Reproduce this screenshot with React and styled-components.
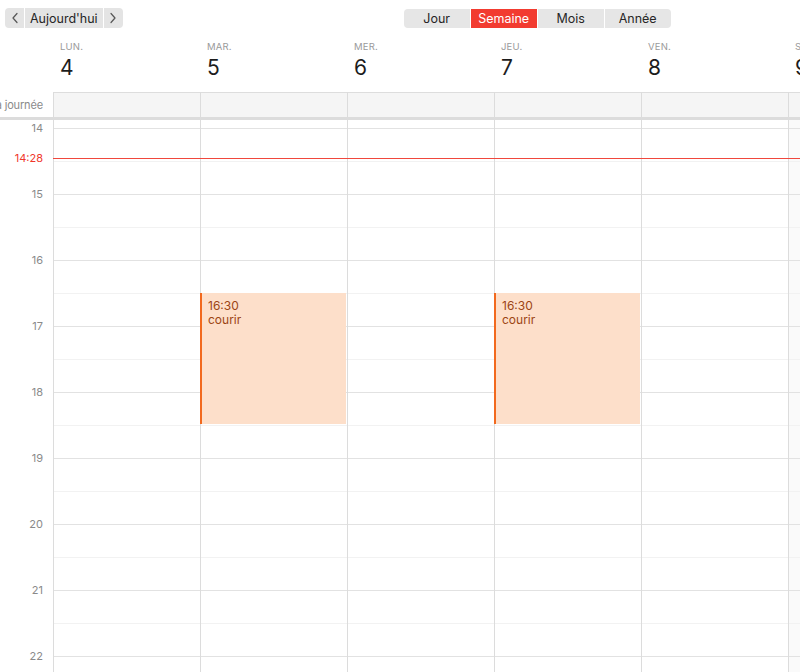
import React from "react";
import { styled, createGlobalStyle } from "styled-components";

const GUTTER = 53;
const COL = 147;
const HOUR = 66;
const FIRST_HOUR = 14;
const TOP_PAD = 8;

const days = [
  { name: "LUN.", num: 4 },
  { name: "MAR.", num: 5 },
  { name: "MER.", num: 6 },
  { name: "JEU.", num: 7 },
  { name: "VEN.", num: 8 },
  { name: "SAM.", num: 9 },
];

const hours = [14, 15, 16, 17, 18, 19, 20, 21, 22, 23];

const events = [
  { day: 1, start: 16.5, end: 18.5, time: "16:30", title: "courir" },
  { day: 3, start: 16.5, end: 18.5, time: "16:30", title: "courir" },
];

const now = { h: 14, m: 28 };

const GlobalStyle = createGlobalStyle`
  html, body {
    margin: 0;
    padding: 0;
    background: #fff;
  }
  body {
    font-family: Inter, "Liberation Sans", sans-serif;
    -webkit-font-smoothing: antialiased;
  }
`;

const Window = styled.div`
  width: 800px;
  height: 672px;
  overflow: hidden;
  display: flex;
  flex-direction: column;
  background: #fff;
`;

const Toolbar = styled.div`
  height: 36px;
  flex: none;
  display: flex;
  align-items: flex-start;
  gap: 281px;
  padding: 8px 0 0 5px;
  box-sizing: border-box;
`;

const NavGroup = styled.div`
  display: flex;
  gap: 1px;
`;

const GreyButton = styled.div`
  height: 20px;
  display: flex;
  align-items: center;
  justify-content: center;
  background: #e4e4e4;
  color: #262626;
  font-size: 12.5px;
  border-radius: ${(p) => p.$radius || "0"};
  padding: 0 ${(p) => (p.$icon ? "0" : "5px")};
  width: ${(p) => (p.$icon ? "19px" : "auto")};
`;

const Segmented = styled.div`
  display: flex;
  gap: 1px;
  margin-top: 1px;
`;

const Segment = styled.div`
  width: 66px;
  height: 19px;
  display: flex;
  align-items: center;
  justify-content: center;
  font-size: 12.5px;
  background: ${(p) => (p.$active ? "#f23b30" : "#e6e6e6")};
  color: ${(p) => (p.$active ? "#fff" : "#262626")};
  border-radius: ${(p) => p.$radius || "0"};
`;

const HeaderRow = styled.div`
  height: 56px;
  flex: none;
  display: grid;
  grid-template-columns: ${GUTTER}px repeat(6, ${COL}px);
`;

const DayHead = styled.div`
  padding: 5px 0 0 7px;
`;

const DayName = styled.div`
  font-size: 9.5px;
  color: #9a9a9a;
  letter-spacing: 0.2px;
  line-height: 11px;
`;

const DayNum = styled.div`
  font-size: 21px;
  color: #1c1c1c;
  line-height: 26px;
  margin-top: 3px;
`;

const AllDayRow = styled.div`
  height: 25px;
  flex: none;
  display: grid;
  grid-template-columns: ${GUTTER}px repeat(6, ${COL}px);
  border-bottom: 3px solid #dcdcdc;
`;

/* "Toute la journée" is wider than the gutter; it is clipped from the left */
const AllDayLabel = styled.div`
  font-size: 11px;
  letter-spacing: -0.15px;
  color: #8a8a8a;
  white-space: nowrap;
  direction: rtl;
  overflow: hidden;
  text-align: left;
  padding: 6px 10px 0 0;
`;

const AllDayCell = styled.div`
  background: #f5f5f5;
  border-top: 1px solid #dddddd;
  border-left: 1px solid #dcdcdc;
`;

const Body = styled.div`
  position: relative;
  flex: 1;
  overflow: hidden;
  display: grid;
  grid-template-columns: ${GUTTER}px repeat(6, ${COL}px);
  padding-top: ${TOP_PAD}px;
`;

const Gutter = styled.div`
  display: flex;
  flex-direction: column;
`;

const HourLabel = styled.div`
  height: ${HOUR}px;
  flex: none;
  font-size: 11px;
  color: #8a8a8a;
  text-align: right;
  padding-right: 10px;
  line-height: 12px;
  transform: translateY(-6px);
`;

const DayColumn = styled.div`
  position: relative;
  display: flex;
  flex-direction: column;
  border-left: 1px solid #dcdcdc;
  margin-top: -${TOP_PAD}px;
  padding-top: ${TOP_PAD}px;
  background: ${(p) => (p.$weekend ? "#fafafa" : "transparent")};
`;

const HourSlot = styled.div`
  height: ${HOUR}px;
  flex: none;
  box-sizing: border-box;
  border-top: 1px solid #e2e2e2;
  position: relative;

  &::after {
    content: "";
    position: absolute;
    left: 0;
    right: 0;
    top: ${HOUR / 2 - 1}px;
    border-top: 1px solid #f2f2f2;
  }
`;

const Event = styled.div`
  position: absolute;
  left: -1px;
  right: 1px;
  box-sizing: border-box;
  background: #fddfca;
  border-left: 2px solid #f2691e;
  padding: 6px 0 0 6px;
  color: #9c4514;
  font-size: 12px;
  line-height: 14px;
  z-index: 1;
`;

const NowLine = styled.div`
  position: absolute;
  left: ${GUTTER}px;
  right: 0;
  height: 1px;
  background: #f0473d;
  z-index: 2;
`;

const NowLabel = styled.div`
  position: absolute;
  left: 0;
  width: ${GUTTER - 10}px;
  text-align: right;
  font-size: 11px;
  line-height: 12px;
  color: #f0372b;
  z-index: 2;
`;

const Chevron = ({ dir }) => (
  <svg width="8" height="12" viewBox="0 0 8 12">
    <path
      d={dir === "left" ? "M6 1.5 L2 6 L6 10.5" : "M2 1.5 L6 6 L2 10.5"}
      fill="none"
      stroke="#555"
      strokeWidth="1.2"
      strokeLinecap="round"
      strokeLinejoin="round"
    />
  </svg>
);

const yOf = (h) => TOP_PAD + (h - FIRST_HOUR) * HOUR;

export default function App() {
  const nowY = yOf(now.h + now.m / 60);

  return (
    <Window>
      <GlobalStyle />
      <Toolbar>
        <NavGroup>
          <GreyButton $icon $radius="4px 0 0 4px">
            <Chevron dir="left" />
          </GreyButton>
          <GreyButton>Aujourd'hui</GreyButton>
          <GreyButton $icon $radius="0 4px 4px 0">
            <Chevron dir="right" />
          </GreyButton>
        </NavGroup>
        <Segmented>
          <Segment $radius="4px 0 0 4px">Jour</Segment>
          <Segment $active>Semaine</Segment>
          <Segment>Mois</Segment>
          <Segment $radius="0 4px 4px 0">Année</Segment>
        </Segmented>
      </Toolbar>

      <HeaderRow>
        <div />
        {days.map((d) => (
          <DayHead key={d.num}>
            <DayName>{d.name}</DayName>
            <DayNum>{d.num}</DayNum>
          </DayHead>
        ))}
      </HeaderRow>

      <AllDayRow>
        <AllDayLabel>Toute la journée</AllDayLabel>
        {days.map((d) => (
          <AllDayCell key={d.num} />
        ))}
      </AllDayRow>

      <Body>
        <Gutter>
          {hours.map((h) => (
            <HourLabel key={h}>{h}</HourLabel>
          ))}
        </Gutter>
        {days.map((d, i) => (
          <DayColumn key={d.num} $weekend={i === 5}>
            {hours.map((h) => (
              <HourSlot key={h} />
            ))}
            {events
              .filter((e) => e.day === i)
              .map((e) => (
                <Event
                  key={e.time}
                  style={{ top: yOf(e.start), height: (e.end - e.start) * HOUR - 1 }}
                >
                  <div>{e.time}</div>
                  <div>{e.title}</div>
                </Event>
              ))}
          </DayColumn>
        ))}
        <NowLine style={{ top: nowY - 1 }} />
        <NowLabel style={{ top: nowY - 7 }}>
          {now.h}:{String(now.m).padStart(2, "0")}
        </NowLabel>
      </Body>
    </Window>
  );
}
